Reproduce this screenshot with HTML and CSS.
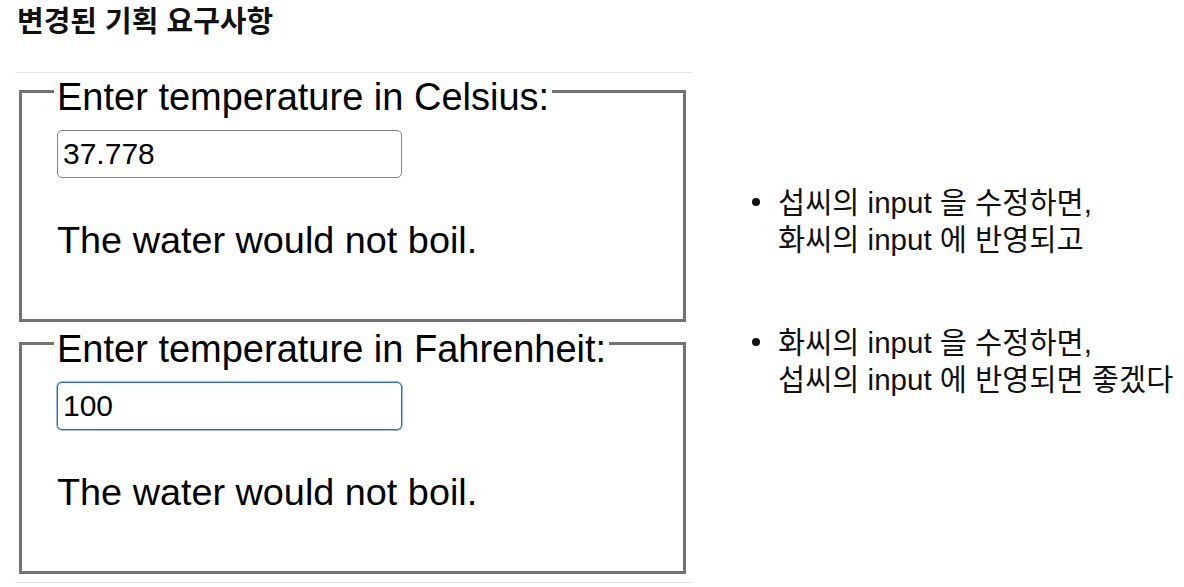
FILE: index.html
```html
<!DOCTYPE html>
<html lang="ko">
<head>
<meta charset="utf-8">
<title>변경된 기획 요구사항</title>
<link rel="stylesheet" href="styles.css">
</head>
<body>
<h3 class="title">변경된 기획 요구사항</h3>
<div class="main">
  <div class="demo">
    <fieldset class="temp">
      <legend class="temp-legend">Enter temperature in Celsius:</legend>
      <input class="temp-input" type="text" value="37.778">
      <p class="verdict">The water would not boil.</p>
    </fieldset>
    <fieldset class="temp">
      <legend class="temp-legend">Enter temperature in Fahrenheit:</legend>
      <input class="temp-input is-focused" type="text" value="100">
      <p class="verdict">The water would not boil.</p>
    </fieldset>
  </div>
  <ul class="notes">
    <li class="note"><span class="note-text">섭씨의 input 을 수정하면,<br>화씨의 input 에 반영되고</span></li>
    <li class="note"><span class="note-text">화씨의 input 을 수정하면,<br>섭씨의 input 에 반영되면 좋겠다</span></li>
  </ul>
</div>
</body>
</html>
```

FILE: styles.css
```css
html, body {
  margin: 0;
  padding: 0;
  background: #fff;
}

body {
  font-family: "Liberation Sans", "Noto Sans CJK KR", sans-serif;
  color: #000;
}

.title {
  margin: 8px 0 36px 17px;
  font-size: 29px;
  line-height: 28px;
  font-weight: 700;
  color: #111;
}

.main {
  display: flex;
  align-items: flex-start;
}

.demo {
  margin-left: 15px;
  width: 677px;
  border-top: 1px solid #e6e6e6;
  border-bottom: 1px solid #e6e6e6;
  padding: 0 0 8px 4px;
  box-sizing: border-box;
  display: flex;
  flex-direction: column;
  gap: 3px;
}

.temp {
  margin: 0;
  width: 667px;
  box-sizing: border-box;
  border: 3px solid #727272;
  padding: 0 0 0 35px;
  min-width: 0;
}

.temp-legend {
  margin-left: -3px;
  padding: 12px 3px 0;
  font-size: 38px;
  line-height: 24px;
  color: #000;
}

.temp-input {
  display: block;
  margin: 21px 0 0;
  width: 345px;
  height: 48px;
  box-sizing: border-box;
  border: 1px solid #858585;
  border-radius: 5px;
  padding: 0 5px;
  font-family: "Liberation Sans", sans-serif;
  font-size: 30px;
  color: #000;
  background: #fff;
  outline: none;
}

.temp-input.is-focused {
  border-color: #2c6bb8;
  box-shadow: 0 0 0 1px rgba(44, 107, 184, 0.45);
}

.verdict {
  margin: 40px 0 57px;
  font-size: 37.8px;
  line-height: 44px;
}

.notes {
  list-style: none;
  margin: 0 0 0 60px;
  padding: 112px 0 0;
  display: flex;
  flex-direction: column;
  gap: 66px;
  font-size: 29.5px;
  line-height: 37px;
  color: #111;
}

.note {
  display: flex;
  align-items: flex-start;
}

.note::before {
  content: "";
  flex: none;
  width: 8px;
  height: 8px;
  border-radius: 50%;
  background: #111;
  margin: 14px 18px 0 0;
}

.note-text {
  white-space: nowrap;
}
```
